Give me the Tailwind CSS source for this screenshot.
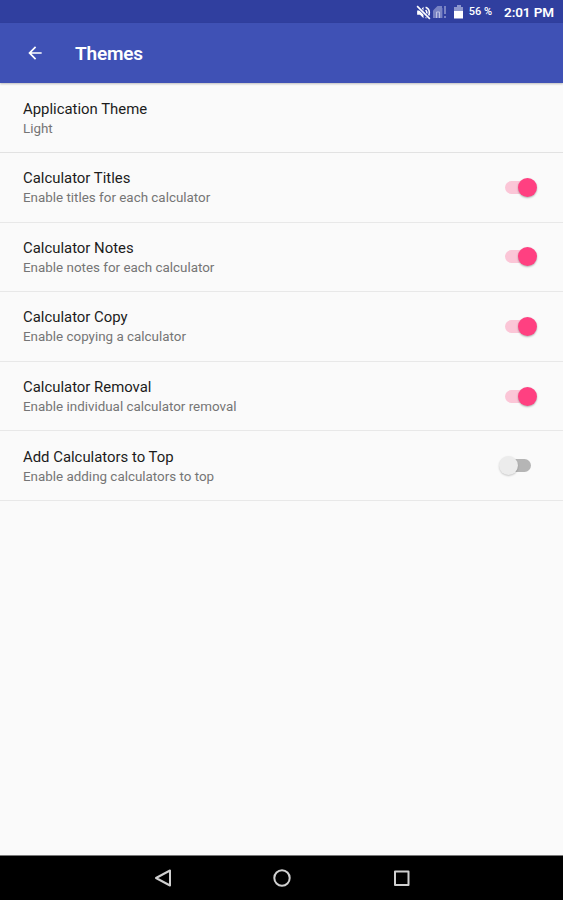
<!DOCTYPE html>
<html lang="en">
<head>
  <meta charset="UTF-8" />
  <meta name="viewport" content="width=device-width, initial-scale=1" />
  <title>Themes</title>
  <script src="https://cdn.jsdelivr.net/npm/@tailwindcss/browser@4"></script>
</head>
<body class="h-screen flex flex-col overflow-hidden bg-[#fafafa] font-[Roboto,sans-serif]">
  <!-- Status bar -->
  <div class="h-[23px] shrink-0 flex items-center justify-end pr-[9px] pt-px bg-[#303f9f] text-white">
    <svg class="w-[17px] h-[17px]" viewBox="0 0 24 24" fill="none" stroke="#fff" stroke-width="2.2">
      <path d="M3 9v6h4l5 5V4L7 9z" fill="#fff" stroke="none" />
      <path d="M15 8.500a5 5 0 0 1 0 7M15 4.500a8 8 0 0 1 0 15" />
      <path d="M3 3l18 18" stroke="#303f9f" stroke-width="4" />
      <path d="M3 3l18 18" />
    </svg>
    <svg class="w-[14px] h-[14px] ml-px" viewBox="0 0 14 14">
      <path d="M4.500 1H9v12H0V5.500z" fill="#7983c3" />
      <path d="M3.500 13V7h3v6" stroke="#bcc2e4" fill="none" />
      <path d="M9.500 3v10" stroke="#4d5bb0" />
      <path d="M12 1v8M12 11v2" stroke="#929bcf" stroke-width="1.500" />
    </svg>
    <svg class="w-[10px] h-[14px] ml-[7px]" viewBox="0 0 10 14">
      <path d="M3 0h4v2h2v5H0V2h3z" fill="#8d97cd" />
      <path d="M0 6h9v7.500H0z" fill="#fff" />
    </svg>
    <span class="ml-[5px] pt-px text-[11px] font-medium whitespace-nowrap">56 %</span>
    <span class="ml-3 text-[13.5px] font-semibold tracking-[-0.1px] whitespace-nowrap">2:01 PM</span>
  </div>

  <!-- App bar -->
  <header class="relative h-[60px] shrink-0 flex items-center pl-[25px] bg-[#3f51b5] text-white shadow-[0_1px_2px_rgba(0,0,0,0.25)]">
    <svg class="w-5 h-5" viewBox="0 0 24 24" fill="#fff">
      <path d="M20 11H7.830l5.590-5.590L12 4l-8 8 8 8 1.410-1.410L7.830 13H20z" />
    </svg>
    <h1 class="ml-[30px] pt-0.5 text-[19px] font-semibold tracking-[-0.2px]">Themes</h1>
  </header>

  <!-- Settings list -->
  <main class="flex-1">
    <div class="h-[70px] px-[23px] pt-4 border-b border-[#e2e2e2]">
      <div class="text-[14.9px] leading-5 text-[#1c1c1c]">Application Theme</div>
      <div class="text-[13.4px] leading-[19px] text-[#757575]">Light</div>
    </div>
    <div id="switches"></div>
  </main>

  <!-- Navigation bar -->
  <nav class="h-[45px] shrink-0 bg-black border-t border-[#777]">
    <svg class="w-full h-full" viewBox="0 0 563 44" fill="none" stroke="#d0d0d0" stroke-width="2">
      <path d="M156 22l14-7.500v15z" stroke-linejoin="round" />
      <circle cx="282" cy="22" r="7.700" />
      <path d="M395 15.500h13.500v13.500H395z" stroke-linejoin="round" />
    </svg>
  </nav>

  <script>
    const settings = [
      { title: "Calculator Titles", note: "Enable titles for each calculator", on: true },
      { title: "Calculator Notes", note: "Enable notes for each calculator", on: true },
      { title: "Calculator Copy", note: "Enable copying a calculator", on: true },
      { title: "Calculator Removal", note: "Enable individual calculator removal", on: true },
      { title: "Add Calculators to Top", note: "Enable adding calculators to top", on: false },
    ];

    const switchOn = `
      <div class="relative w-8 h-5 mr-[3px] flex items-center">
        <div class="w-7 h-[13px] rounded-full bg-[#fbc6d7]"></div>
        <div class="absolute right-0 w-[19px] h-[19px] rounded-full bg-[#ff4081] shadow-[0_1px_2px_rgba(0,0,0,0.3)]"></div>
      </div>`;
    const switchOff = `
      <div class="relative w-8 h-5 mr-[9px] flex items-center justify-end">
        <div class="w-7 h-[13px] rounded-full bg-[#b5b5b5]"></div>
        <div class="absolute left-0 w-[19px] h-[19px] rounded-full bg-[#ececec] shadow-[0_1px_2px_rgba(0,0,0,0.2)]"></div>
      </div>`;

    document.getElementById("switches").innerHTML = settings.map((s) => `
      <div class="h-[69.6px] px-[23px] flex items-center justify-between border-b border-[#e8e8e8]">
        <div class="pt-px">
          <div class="text-[14.9px] leading-5 text-[#1c1c1c]">${s.title}</div>
          <div class="text-[13.4px] leading-[19px] text-[#757575]">${s.note}</div>
        </div>
        ${s.on ? switchOn : switchOff}
      </div>
    `).join("");
  </script>
</body>
</html>
